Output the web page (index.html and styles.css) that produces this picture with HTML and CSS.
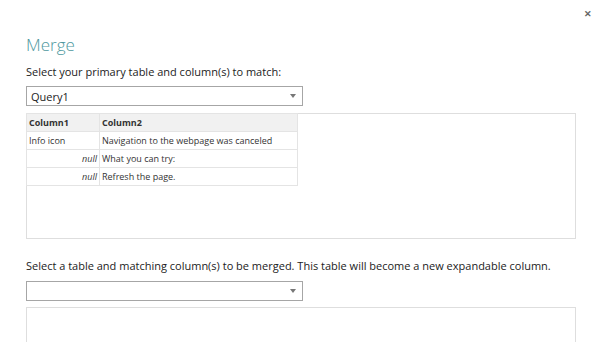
FILE: index.html
```html
<!doctype html>
<html>
	<head>
		<meta charset="utf-8">
		<title>Merge</title>
		<link rel="stylesheet" href="styles.css">
	</head>
	<body>
		<div class="topbar">
			<span class="close">&#x2715;</span>
		</div>
		<div class="dialog">
			<h1 class="title">Merge</h1>

			<p class="label">Select your primary table and column(s) to match:</p>
			<div class="select">
				<span class="select-value">Query1</span>
				<span class="caret"></span>
			</div>
			<div class="preview">
				<table class="grid">
					<tr>
						<th class="c1">Column1</th>
						<th class="c2">Column2</th>
					</tr>
					<tr>
						<td>Info icon</td>
						<td>Navigation to the webpage was canceled</td>
					</tr>
					<tr>
						<td class="null">null</td>
						<td>What you can try:</td>
					</tr>
					<tr>
						<td class="null">null</td>
						<td>Refresh the page.</td>
					</tr>
				</table>
			</div>

			<p class="label label-second">Select a table and matching column(s) to be merged. This table will become a new expandable column.</p>
			<div class="select select-second">
				<span class="select-value"></span>
				<span class="caret"></span>
			</div>
			<div class="preview preview-second"></div>
		</div>
	</body>
</html>
```

FILE: styles.css
```css
body
{
	margin: 0;
	background: #fff;
	font-family: "Open Sans", "Noto Sans", sans-serif;
	color: #222;
	overflow: hidden;
}
.topbar
{
	display: flex;
	justify-content: flex-end;
	height: 24px;
	padding: 6px 8px 0 0;
	box-sizing: border-box;
}
.close
{
	font-size: 9px;
	color: #666;
	font-weight: bold;
	line-height: 16px;
}
.dialog
{
	padding: 0 24px 0 26px;
}
.title
{
	margin: 9px 0 0 0;
	font-size: 17px;
	font-weight: 300;
	line-height: 24px;
	color: #4d979d;
}
.label
{
	margin: 7px 0 0 0;
	font-size: 11px;
	line-height: 16px;
}
.label-second
{
	margin-top: 19px;
}
.select
{
	display: flex;
	align-items: center;
	justify-content: space-between;
	width: 277px;
	height: 20px;
	margin-top: 6px;
	border: 1px solid #a6a6a6;
	box-sizing: border-box;
	padding: 0 6px 0 4px;
	font-size: 11px;
}
.select-second
{
	margin-top: 7px;
}
.caret
{
	width: 0;
	height: 0;
	border-left: 3px solid transparent;
	border-right: 3px solid transparent;
	border-top: 4px solid #777;
}
.preview
{
	height: 126px;
	margin-top: 7px;
	border: 1px solid #dedede;
	box-sizing: border-box;
}
.preview-second
{
	margin-top: 6px;
	height: 60px;
}
.grid
{
	border-collapse: collapse;
	font-size: 9px;
	color: #333;
	margin: -1px 0 0 -1px;
}
.grid th, .grid td
{
	height: 18px;
	padding: 0 2px;
	border: 1px solid #e4e4e4;
	text-align: left;
	box-sizing: border-box;
	white-space: nowrap;
}
.grid th
{
	background: #f1f1f1;
	font-weight: bold;
}
.c1
{
	width: 73px;
}
.c2
{
	width: 198px;
}
.grid td.null
{
	text-align: right;
	font-style: italic;
}
```
